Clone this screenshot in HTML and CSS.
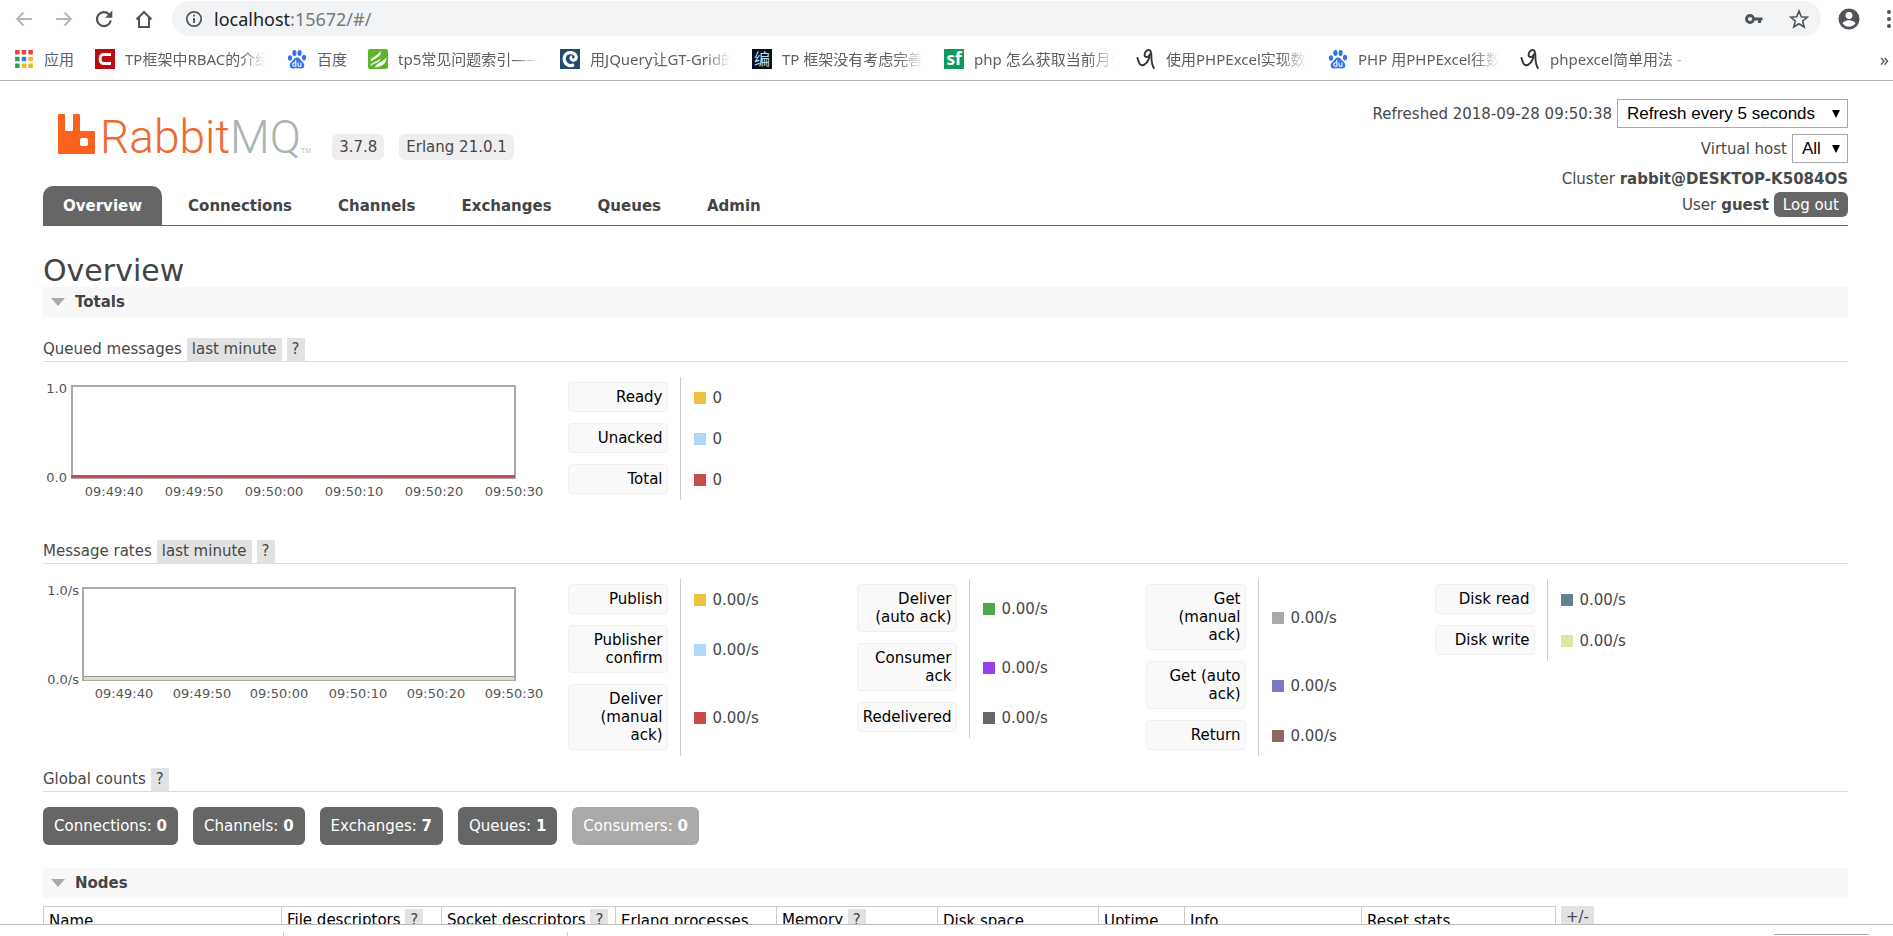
FILE: index.html
```html
<!DOCTYPE html>
<html lang="en">
<head>
<meta charset="utf-8">
<title>RabbitMQ Management</title>
<link rel="stylesheet" href="styles.css">
</head>
<body>
<svg class="defs" width="0" height="0" aria-hidden="true">
  <defs>
    <symbol id="paw" viewBox="0 0 20 20">
      <g fill="#3272ee">
        <ellipse cx="3" cy="9" rx="2.1" ry="2.8"/>
        <ellipse cx="7.4" cy="4" rx="2.1" ry="3"/>
        <ellipse cx="12.6" cy="4" rx="2.1" ry="3"/>
        <ellipse cx="17" cy="8.6" rx="2.1" ry="2.8"/>
        <path d="M10 8.5c2.2 0 3 1.8 4.300 3.200 1.600 1.600 3.200 2.600 3 5-.2 2.400-2 3-4 2.700-2.200-.3-4.400-.3-6.600 0-2 .3-3.800-.3-4-2.700-.2-2.400 1.400-3.400 3-5C7 10.300 7.800 8.500 10 8.500z"/>
      </g>
      <path d="M8.800 11v6.200H7.500c-2.400 0-2.400-3.400 0-3.400h1.300M11 13.600v2.400c0 1 .6 1.300 1.300 1.300h1.600v-3.700" fill="none" stroke="#fff" stroke-width="1.100"/>
    </symbol>
    <symbol id="scribble" viewBox="0 0 20 20">
      <path d="M1.500 9c.8 3.500 1.800 7 4.300 7.200 3.400.2 6.500-3.700 7.600-8.200M13.800 5.500c-.8 3-5.200 3.600-5.200.4C8.600 3 10.700 1 12.600 1c2.400 0 2.800 3 2.800 6.500 0 4.500.4 8 2.400 11.500" fill="none" stroke="#333" stroke-width="1.900" stroke-linecap="round"/>
    </symbol>
  </defs>
</svg>

<header class="browser">
  <div class="toolbar">
    <button class="nav-btn" type="button" aria-label="Back"><svg width="20" height="20" viewBox="0 0 20 20"><path d="M18 10H3M9.500 3.500 3 10l6.500 6.500" fill="none" stroke="#b4b6b9" stroke-width="1.800"/></svg></button>
    <button class="nav-btn" type="button" aria-label="Forward"><svg width="20" height="20" viewBox="0 0 20 20"><path d="M2 10h15M10.500 3.500 17 10l-6.500 6.500" fill="none" stroke="#b4b6b9" stroke-width="1.800"/></svg></button>
    <button class="nav-btn" type="button" aria-label="Reload"><svg width="20" height="20" viewBox="0 0 20 20"><path d="M16.800 11.500A7 7 0 1 1 15 5.200l1 1" fill="none" stroke="#505357" stroke-width="2.200"/><path d="M18.300 1.500v7.300H11z" fill="#505357"/></svg></button>
    <button class="nav-btn" type="button" aria-label="Home"><svg width="20" height="20" viewBox="0 0 20 20"><path d="M2.500 10.500 10 3l7.500 7.500M5 9v9h10V9" fill="none" stroke="#505357" stroke-width="2"/></svg></button>
    <div class="omnibox">
      <svg width="18" height="18" viewBox="0 0 18 18"><circle cx="9" cy="9" r="7.200" fill="none" stroke="#505357" stroke-width="1.700"/><path d="M9 8v5M9 4.800v1.800" stroke="#505357" stroke-width="1.800"/></svg>
      <span class="url">localhost<span class="url-rest">:15672/#/</span></span>
      <svg class="key" width="20" height="14" viewBox="0 0 20 14"><circle cx="6" cy="7" r="3.500" fill="none" stroke="#505357" stroke-width="2.800"/><path d="M9 7h9.500M15.500 7v4" fill="none" stroke="#505357" stroke-width="3"/></svg>
      <svg width="20" height="20" viewBox="0 0 20 20"><path d="m10 2 2.300 5.700 6.100.4-4.700 3.900 1.500 6L10 14.700 4.800 18l1.500-6L1.600 8.100l6.100-.4z" fill="none" stroke="#505357" stroke-width="1.600"/></svg>
    </div>
    <button class="nav-btn avatar" type="button" aria-label="Profile"><svg width="22" height="22" viewBox="0 0 22 22"><circle cx="11" cy="11" r="10.500" fill="#505357"/><circle cx="11" cy="7.500" r="3.400" fill="#fff"/><path d="M4.500 15.500c1-2.600 4-3.300 6.500-3.300s5.500.7 6.500 3.300c-1.500 2-3.800 3.200-6.500 3.200s-5-1.200-6.500-3.200z" fill="#fff"/></svg></button>
    <button class="nav-btn more" type="button" aria-label="Menu"><svg width="6" height="20" viewBox="0 0 6 20"><g fill="#505357"><circle cx="3" cy="3" r="2"/><circle cx="3" cy="10" r="2"/><circle cx="3" cy="17" r="2"/></g></svg></button>
  </div>
  <nav class="bookmarks" aria-label="Bookmarks">
    <a class="bookmark" href="#"><svg class="apps" width="20" height="20" viewBox="0 0 18 18"><path fill="#e2453a" d="M1 1h4v4H1zM7 1h4v4H7zM13 1h4v4h-4z"/><path fill="#23a455" d="M1 7h4v4H1zM1 13h4v4H1z"/><path fill="#2f7de1" d="M7 7h4v4H7z"/><path fill="#f4b619" d="M13 7h4v4h-4zM7 13h4v4H7zM13 13h4v4h-4z"/></svg><span>应用</span></a>
    <a class="bookmark" href="#"><svg width="20" height="20" viewBox="0 0 20 20"><path d="M0 0h20v20H0z" fill="#bd0a12"/><path d="M16 5.500H8.500c-4.500 0-4.500 9 0 9H16" fill="none" stroke="#fff" stroke-width="3"/></svg><span class="clip">TP框架中RBAC的介绍</span></a>
    <a class="bookmark" href="#"><svg width="20" height="20"><use href="#paw"/></svg><span>百度</span></a>
    <a class="bookmark" href="#"><svg width="20" height="20" viewBox="0 0 20 20"><rect width="20" height="20" rx="2" fill="#62b32c"/><path d="M2.500 12.500C3 7.500 8.500 8 12.500 2c1.500 5.500-4.500 7-10 10.500zM7 18.500c1-4.500 5.500-4 11.500-10 0 6.500-5 9-11.500 10zM2 17c1.500-3.500 6-4 11-7.500-1.500 4-6.500 4.500-11 7.500z" fill="#fff"/></svg><span class="clip">tp5常见问题索引——</span></a>
    <a class="bookmark" href="#"><svg width="20" height="20" viewBox="0 0 20 20"><path d="M0 0h20v20H0z" fill="#234a6e"/><path d="M14 15.800C9 18 4.200 15 4.200 10S8 3.200 11.500 3.700s5.200 3.300 4.700 5.300-3.200 2.600-4.500 1.600-.8-2.600.4-2.800" fill="none" stroke="#fff" stroke-width="3.200"/></svg><span class="clip">用JQuery让GT-Grid的</span></a>
    <a class="bookmark" href="#"><span class="tile tile-bian">编</span><span class="clip">TP 框架没有考虑完善</span></a>
    <a class="bookmark" href="#"><span class="tile tile-sf">sf</span><span class="clip">php 怎么获取当前月份</span></a>
    <a class="bookmark" href="#"><svg width="20" height="20"><use href="#scribble"/></svg><span class="clip">使用PHPExcel实现数据</span></a>
    <a class="bookmark" href="#"><svg width="20" height="20"><use href="#paw"/></svg><span class="clip">PHP 用PHPExcel往数据</span></a>
    <a class="bookmark" href="#"><svg width="20" height="20"><use href="#scribble"/></svg><span class="clip">phpexcel简单用法 - </span></a>
    <button class="overflow" type="button" aria-label="More bookmarks">»</button>
  </nav>
</header>

<main class="page">
  <header class="site-header">
    <div class="site-left">
      <div class="brand">
        <a class="logo" href="#" aria-label="RabbitMQ"><svg width="38" height="40" viewBox="0 0 38 40"><path fill="#f9611d" fill-rule="evenodd" d="M1 0h5Q7 0 7 1V16q0 1 1 1h6Q15 17 15 16V1Q15 0 16 0h5Q22 0 22 1V16q0 1 1 1h13Q37 17 37 18v21q0 1-1 1h-35Q0 40 0 39v-38Q0 0 1 0zM24 24q-2 0-2 2V30q0 2 2 2h4q2 0 2-2v-4q0-2-2-2z"/></svg><span class="word">Rabbit<span class="mq">MQ</span></span><span class="tm">TM</span></a>
        <span class="version">3.7.8</span>
        <span class="version">Erlang 21.0.1</span>
      </div>
      <nav class="tabs">
        <a class="tab selected" href="#">Overview</a>
        <a class="tab" href="#">Connections</a>
        <a class="tab" href="#">Channels</a>
        <a class="tab" href="#">Exchanges</a>
        <a class="tab" href="#">Queues</a>
        <a class="tab" href="#">Admin</a>
      </nav>
    </div>
    <div class="login">
      <div class="login-row"><label for="refresh">Refreshed 2018-09-28 09:50:38</label><span class="picker"><select id="refresh" class="refresh"><option>Refresh every 5 seconds</option></select></span></div>
      <div class="login-row"><label for="vhost">Virtual host</label><span class="picker"><select id="vhost" class="vhost"><option>All</option></select></span></div>
      <div class="login-text">Cluster <b>rabbit@DESKTOP-K5084OS</b></div>
      <div class="login-row user">User <b>guest</b><button class="logout" type="button">Log out</button></div>
    </div>
  </header>

  <h1>Overview</h1>
  <h2 class="section">Totals</h2>
  <div class="totals">
    <h3 class="sub">Queued messages <button type="button" class="hint">last minute</button><button type="button" class="hint">?</button></h3>
    <div class="stats">
      <svg class="chart" width="525" height="151" viewBox="0 0 525 151" role="img" aria-label="Queued messages">
        <rect x="29" y="9" width="443" height="92" fill="#fff" stroke="#aaa" stroke-width="2"/>
        <rect x="28" y="98" width="444" height="3" fill="#cb4b4b"/>
        <g class="ylab"><text x="24" y="16">1.0</text><text x="24" y="105">0.0</text></g>
        <g class="xlab"><text x="71" y="119">09:49:40</text><text x="151" y="119">09:49:50</text><text x="231" y="119">09:50:00</text><text x="311" y="119">09:50:10</text><text x="391" y="119">09:50:20</text><text x="471" y="119">09:50:30</text></g>
      </svg>
      <div class="legends">
        <table class="legend">
          <tr><th scope="row"><span>Ready</span></th><td><i class="c1"></i>0</td></tr>
          <tr><th scope="row"><span>Unacked</span></th><td><i class="c2"></i>0</td></tr>
          <tr><th scope="row"><span>Total</span></th><td><i class="c3"></i>0</td></tr>
        </table>
      </div>
    </div>

    <h3 class="sub">Message rates <button type="button" class="hint">last minute</button><button type="button" class="hint">?</button></h3>
    <div class="stats">
      <svg class="chart" width="525" height="151" viewBox="0 0 525 151" role="img" aria-label="Message rates">
        <rect x="40" y="9" width="432" height="92" fill="#fff" stroke="#aaa" stroke-width="2"/>
        <rect x="41" y="97" width="430" height="1" fill="#999"/>
        <rect x="41" y="98" width="430" height="3" fill="#dbdfc4"/>
        <g class="ylab"><text x="36" y="16">1.0/s</text><text x="36" y="105">0.0/s</text></g>
        <g class="xlab"><text x="81" y="119">09:49:40</text><text x="159" y="119">09:49:50</text><text x="236" y="119">09:50:00</text><text x="315" y="119">09:50:10</text><text x="393" y="119">09:50:20</text><text x="471" y="119">09:50:30</text></g>
      </svg>
      <div class="legends">
        <table class="legend">
          <tr><th scope="row"><span>Publish</span></th><td><i class="c1"></i>0.00/s</td></tr>
          <tr><th scope="row"><span>Publisher confirm</span></th><td><i class="c2"></i>0.00/s</td></tr>
          <tr><th scope="row"><span>Deliver (manual ack)</span></th><td><i class="c3"></i>0.00/s</td></tr>
        </table>
        <table class="legend">
          <tr><th scope="row"><span>Deliver (auto ack)</span></th><td><i class="c4"></i>0.00/s</td></tr>
          <tr><th scope="row"><span>Consumer ack</span></th><td><i class="c5"></i>0.00/s</td></tr>
          <tr><th scope="row"><span>Redelivered</span></th><td><i class="c6"></i>0.00/s</td></tr>
        </table>
        <table class="legend">
          <tr><th scope="row"><span>Get (manual ack)</span></th><td><i class="c7"></i>0.00/s</td></tr>
          <tr><th scope="row"><span>Get (auto ack)</span></th><td><i class="c8"></i>0.00/s</td></tr>
          <tr><th scope="row"><span>Return</span></th><td><i class="c9"></i>0.00/s</td></tr>
        </table>
        <table class="legend">
          <tr><th scope="row"><span>Disk read</span></th><td><i class="c10"></i>0.00/s</td></tr>
          <tr><th scope="row"><span>Disk write</span></th><td><i class="c11"></i>0.00/s</td></tr>
        </table>
      </div>
    </div>

    <h3 class="sub">Global counts <button type="button" class="hint">?</button></h3>
    <div class="counts">
      <a class="count" href="#">Connections: <b>0</b></a>
      <a class="count" href="#">Channels: <b>0</b></a>
      <a class="count" href="#">Exchanges: <b>7</b></a>
      <a class="count" href="#">Queues: <b>1</b></a>
      <span class="count off">Consumers: <b>0</b></span>
    </div>
  </div>

  <h2 class="section">Nodes</h2>
  <div class="nodes">
    <table class="node-table">
      <colgroup><col class="w238"><col class="w160"><col class="w174"><col class="w161"><col class="w161"><col class="w161"><col class="w86"><col class="w177"><col class="w194"></colgroup>
      <thead><tr>
        <th>Name</th>
        <th>File descriptors <button type="button" class="hint">?</button></th>
        <th>Socket descriptors <button type="button" class="hint">?</button></th>
        <th>Erlang processes</th>
        <th>Memory <button type="button" class="hint">?</button></th>
        <th>Disk space</th><th>Uptime</th><th>Info</th><th>Reset stats</th>
      </tr></thead>
    </table>
    <button type="button" class="hint columns">+/-</button>
  </div>
</main>

<footer class="shelf"><span class="shelf-item first"></span><span class="shelf-item"></span><span class="shelf-all"></span></footer>
</body>
</html>
```
FILE: styles.css
```css
* { box-sizing: border-box; }

body {
  margin: 0;
  height: 100vh;
  display: flex;
  flex-direction: column;
  overflow: hidden;
  background: #fff;
  color: #484848;
  font: 15px/18px "DejaVu Sans", Verdana, sans-serif;
}

button { font: inherit; color: inherit; border: 0; background: none; padding: 0; }
a { color: inherit; text-decoration: none; }
svg { flex: none; display: block; }
.defs { position: absolute; }

/* Browser chrome */
.browser {
  flex: none;
  border-bottom: 1px solid #b3b1b2;
  font-family: "Noto Sans", "Noto Sans CJK SC", sans-serif;
}
.toolbar { display: flex; align-items: center; gap: 20px; padding: 1px 0 0 14px; }
.nav-btn { display: flex; }
.omnibox {
  flex: 1;
  display: flex;
  align-items: center;
  height: 35px;
  margin-left: -2px;
  padding: 0 12px 0 13px;
  gap: 11px;
  border-radius: 18px;
  background: #f1f3f4;
}
.url { flex: 1; font-size: 18px; line-height: 24px; color: #202124; }
.url-rest { color: #75797d; }
.key { margin-right: 14px; }
.avatar { margin-left: -3px; }
.more { margin: 0 1px 0 6px; }

.bookmarks { display: flex; align-items: center; gap: 21px; height: 44px; padding: 2px 4px 0 14px; }
.bookmark { display: flex; align-items: center; gap: 10px; color: #5c5f63; line-height: 22px; white-space: nowrap; }
.clip {
  width: 141px;
  overflow: hidden;
  -webkit-mask-image: linear-gradient(to right, #000 115px, transparent);
  mask-image: linear-gradient(to right, #000 115px, transparent);
}
.tile { width: 20px; height: 20px; text-align: center; line-height: 20px; color: #fff; }
.tile-bian { background: #07111c; color: #b9dcf5; font-size: 16px; }
.tile-sf { background: #0d9a61; font-size: 17px; font-weight: 700; }
.overflow { margin-left: auto; font-size: 18px; color: #505357; }

/* Management page */
.page { flex: 1; min-height: 0; overflow: hidden; padding: 0 45px 0 43px; }
.site-header { display: flex; justify-content: space-between; border-bottom: 1px solid #666; }
.site-left { display: flex; flex-direction: column; justify-content: space-between; }
.brand { display: flex; align-items: flex-end; gap: 15px; padding: 30px 0 0 15px; }
.logo { display: flex; align-items: flex-end; height: 49px; padding-bottom: 6px; margin-right: 6px; }
.word { margin-left: 4px; color: #f0692f; font: 300 46px/34px Roboto, sans-serif; }
.mq { color: #a9b5b2; }
.tm { color: #b9c2c0; font: 7px/7px "Liberation Sans", sans-serif; }
.version { padding: 4px 7px; border-radius: 6px; background: #eee; }

.tabs { display: flex; gap: 6px; }
.tab { padding: 11px 20px 10px; border-radius: 10px 10px 0 0; font-weight: 700; color: #444; }
.selected { background: #666; color: #fff; }

.login { display: flex; flex-direction: column; align-items: flex-end; padding: 18px 0 8px; }
.login-row { display: flex; align-items: center; gap: 5px; margin-bottom: 6px; }
.login-text { margin: 0 0 4px; line-height: 18px; padding: 1px 0 0; }
.user { margin: 0; }
.picker { position: relative; display: flex; }
.picker::after {
  content: "";
  position: absolute;
  top: 11px;
  right: 8px;
  border: 4px solid transparent;
  border-top: 8px solid #000;
  border-bottom: 0;
  pointer-events: none;
}
select {
  appearance: none;
  height: 29px;
  padding: 0 9px;
  border: 1px solid #a9a9a9;
  border-radius: 0;
  background: #fff;
  color: #000;
  font: 17px/20px "Liberation Sans", Arial, sans-serif;
}
.refresh { width: 231px; }
.vhost { width: 56px; }
.logout { height: 25px; padding: 0 9px; border-radius: 6px; background: #666; color: #fff; }

h1 { margin: 29px 0 0; font-size: 30px; line-height: 32px; font-weight: 400; color: #444; }
.section {
  display: flex;
  align-items: center;
  gap: 10px;
  height: 30px;
  margin: 0;
  padding-left: 8px;
  background: #f8f8f8;
  font-size: 15px;
  font-weight: 700;
  color: #444;
}
.section::before { content: ""; border: 7px solid transparent; border-top: 8px solid #aaa; border-bottom: 0; }

.totals { padding: 9px 0 23px; }
.sub {
  display: flex;
  gap: 5px;
  margin: 12px 0 15px;
  border-bottom: 1px solid #ddd;
  font-size: 15px;
  line-height: 23px;
  font-weight: 400;
}
.hint { padding: 0 5px; background: #e2e2e2; line-height: 23px; color: #484848; }

.stats { display: flex; align-items: flex-start; }
.chart text { font: 13px "DejaVu Sans", Verdana, sans-serif; fill: #555; }
.ylab { text-anchor: end; }
.xlab { text-anchor: middle; }
.legends { display: flex; align-items: flex-start; gap: 96px; }
.legend { width: 193px; table-layout: fixed; border-collapse: collapse; }
.legend th { width: 112px; padding: 5px 12px 6px 0; border-right: 1px solid #ccc; font-weight: 400; text-align: right; color: #000; }
.legend th span { display: block; padding: 5px 4px; border: 1px solid #f0f0f0; border-radius: 4px; background: #fafafa; }
.legend td { padding: 0 0 0 13px; white-space: nowrap; }
.legend i { display: inline-block; width: 12px; height: 12px; margin-right: 7px; vertical-align: -1px; }
.c1 { background: #edc240; }
.c2 { background: #afd8f8; }
.c3 { background: #cb4b4b; }
.c4 { background: #4da74d; }
.c5 { background: #9440ed; }
.c6 { background: #666; }
.c7 { background: #aaa; }
.c8 { background: #7c79c3; }
.c9 { background: #8e6767; }
.c10 { background: #67808e; }
.c11 { background: #e0e6a8; }

.counts { display: flex; gap: 15px; }
.count { padding: 10px 11px; border-radius: 6px; background: #666; color: #fff; }
.off { background: #aaa; }

.nodes { display: flex; align-items: flex-start; gap: 5px; padding-top: 8px; }
.node-table { table-layout: fixed; width: 1513px; border-collapse: collapse; color: #000; }
.node-table th { height: 28px; padding: 0 5px; border: 1px solid #ccc; border-bottom: 0; text-align: left; font-weight: 400; white-space: nowrap; }
.w86 { width: 86px; }
.w160 { width: 160px; }
.w161 { width: 161px; }
.w174 { width: 174px; }
.w177 { width: 177px; }
.w194 { width: 194px; }
.w238 { width: 238px; }
.columns { padding-bottom: 8px; }

/* Top edge of the download shelf */
.shelf { flex: none; display: flex; align-items: flex-end; height: 12px; border-top: 1px solid #bbb; }
.shelf-item { width: 284px; height: 4px; border-right: 1px solid #ccc; }
.shelf-all { width: 95px; height: 2px; margin: 0 24px 0 auto; border-top: 1px solid #aaa; }
```
